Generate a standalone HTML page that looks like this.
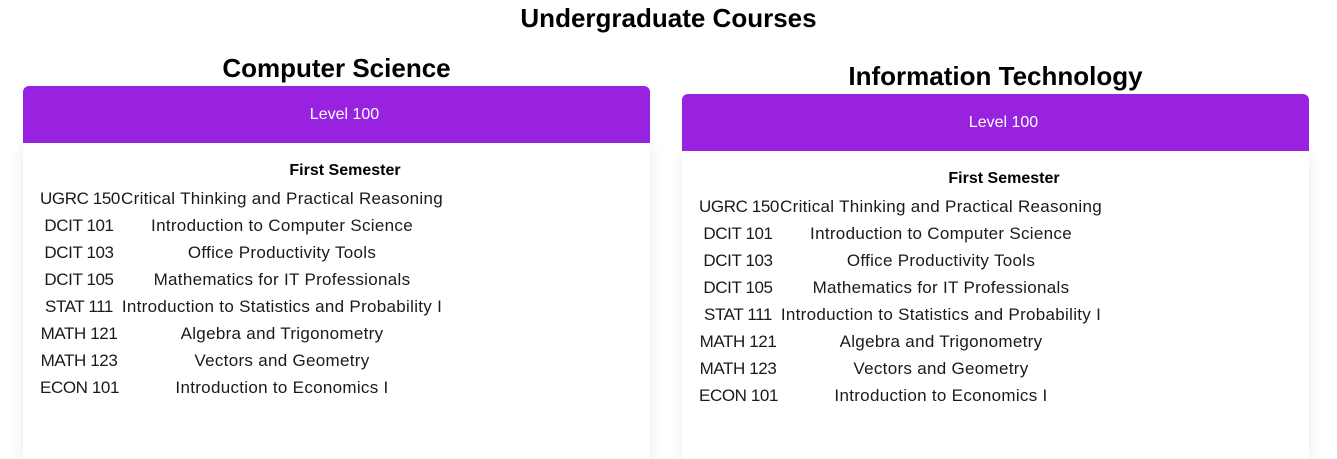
<!DOCTYPE html>
<html><head><meta charset="utf-8"><style>
*{margin:0;padding:0;box-sizing:border-box}
html,body{width:1337px;height:459px;overflow:hidden}
body{background:#fff;font-family:"Liberation Sans",sans-serif;color:#111;position:relative}
h1{position:absolute;left:0;width:1337px;top:3px;text-align:center;font-size:26px;font-weight:bold;color:#000}
.col{position:absolute;width:627px;top:0}
.col h2{position:absolute;left:0;width:627px;text-align:center;font-size:26px;font-weight:bold;color:#000}
.bar{position:absolute;left:0;width:627px;height:57px;background:#9822e0;border-radius:6px 6px 0 0;color:#fff;text-align:center;line-height:57px;font-size:16px;padding-left:16px}
.card{position:absolute;left:0;width:627px;background:#fff;box-shadow:0 2px 14px rgba(0,0,0,0.09);border-radius:6px 6px 0 0}
.sem{position:absolute;left:0;width:644px;text-align:center;font-weight:bold;font-size:16px;color:#000}
.row{position:absolute;left:0;height:27px;font-size:17px;line-height:27px;color:#1a1a1a;white-space:nowrap}
.row .c{position:absolute;left:17px;width:78px;text-align:center;white-space:nowrap;letter-spacing:-0.4px}
.row .n{position:absolute;left:95px;width:328px;text-align:center;white-space:nowrap;letter-spacing:0.3px}
</style></head><body>
<h1>Undergraduate Courses</h1>
<div class="col" style="left:23px">
<h2 style="top:53px">Computer Science</h2>
<div class="card" style="top:143px;height:316px"></div>
<div class="bar" style="top:86px">Level 100</div>
<div class="sem" style="top:162px">First Semester</div>
<div class="row" style="top:185px"><span class="c">UGRC 150</span><span class="n">Critical Thinking and Practical Reasoning</span></div>
<div class="row" style="top:212px"><span class="c">DCIT 101</span><span class="n">Introduction to Computer Science</span></div>
<div class="row" style="top:239px"><span class="c">DCIT 103</span><span class="n">Office Productivity Tools</span></div>
<div class="row" style="top:266px"><span class="c">DCIT 105</span><span class="n">Mathematics for IT Professionals</span></div>
<div class="row" style="top:293px"><span class="c">STAT 111</span><span class="n">Introduction to Statistics and Probability I</span></div>
<div class="row" style="top:320px"><span class="c">MATH 121</span><span class="n">Algebra and Trigonometry</span></div>
<div class="row" style="top:347px"><span class="c">MATH 123</span><span class="n">Vectors and Geometry</span></div>
<div class="row" style="top:374px"><span class="c">ECON 101</span><span class="n">Introduction to Economics I</span></div>
</div>
<div class="col" style="left:682px">
<h2 style="top:61px">Information Technology</h2>
<div class="card" style="top:151px;height:308px"></div>
<div class="bar" style="top:94px">Level 100</div>
<div class="sem" style="top:170px">First Semester</div>
<div class="row" style="top:193px"><span class="c">UGRC 150</span><span class="n">Critical Thinking and Practical Reasoning</span></div>
<div class="row" style="top:220px"><span class="c">DCIT 101</span><span class="n">Introduction to Computer Science</span></div>
<div class="row" style="top:247px"><span class="c">DCIT 103</span><span class="n">Office Productivity Tools</span></div>
<div class="row" style="top:274px"><span class="c">DCIT 105</span><span class="n">Mathematics for IT Professionals</span></div>
<div class="row" style="top:301px"><span class="c">STAT 111</span><span class="n">Introduction to Statistics and Probability I</span></div>
<div class="row" style="top:328px"><span class="c">MATH 121</span><span class="n">Algebra and Trigonometry</span></div>
<div class="row" style="top:355px"><span class="c">MATH 123</span><span class="n">Vectors and Geometry</span></div>
<div class="row" style="top:382px"><span class="c">ECON 101</span><span class="n">Introduction to Economics I</span></div>
</div>
</body></html>
